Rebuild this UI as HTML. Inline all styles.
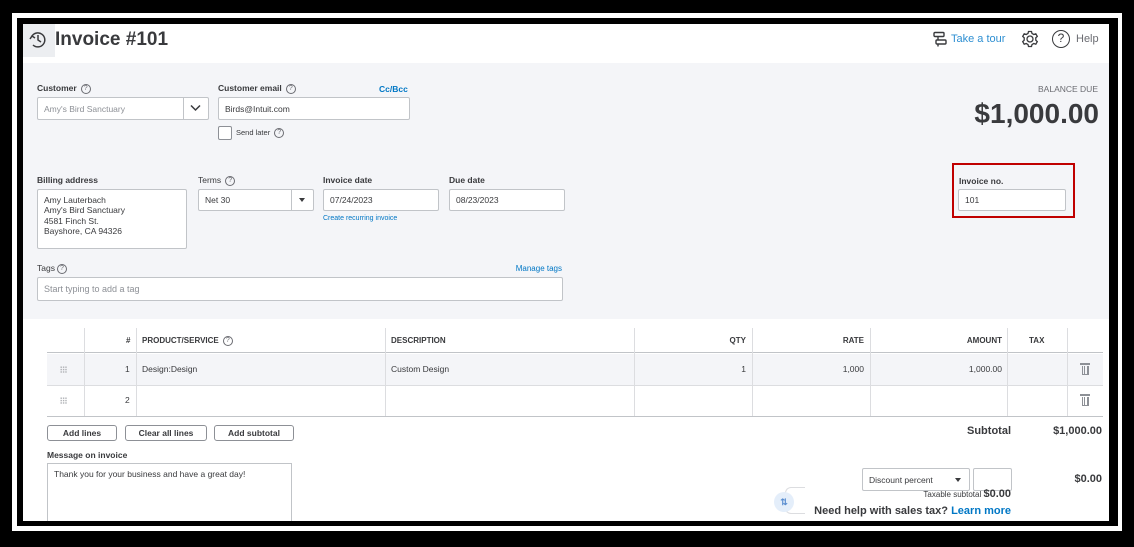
<!DOCTYPE html>
<html><head><meta charset="utf-8"><style>
*{margin:0;padding:0;box-sizing:border-box}
body{width:1134px;height:547px;background:#000;position:relative;overflow:hidden;font-family:"Liberation Sans",sans-serif;color:#393a3d}
.a{position:absolute}
.lbl{position:absolute;font-size:8.5px;font-weight:bold;color:#393a3d}
.inp{position:absolute;background:#fff;border:1px solid #c1c4c8;border-radius:2px;font-size:8.5px;color:#393a3d;padding-left:6px;display:flex;align-items:center}
.q{display:inline-block;width:10px;height:10px;border:1px solid #6b6c72;border-radius:50%;font-size:7px;text-align:center;line-height:8px;color:#6b6c72;font-weight:normal;vertical-align:middle;margin-left:4px}
.blue{color:#0077c5}
.th{position:absolute;top:336px;font-size:8px;font-weight:bold;color:#393a3d}
.td{position:absolute;font-size:8.5px;color:#393a3d}
.vl{position:absolute;width:1px;background:#dcdde0}
.btn{position:absolute;top:425px;height:16px;border:1px solid #8d9096;border-radius:3px;font-size:8.5px;font-weight:bold;text-align:center;line-height:14px;background:#fff}
.trash{position:absolute;width:7px;height:9px;border:1.5px solid #8d9096;border-top:none;background:repeating-linear-gradient(90deg,transparent 0 1px,#8d9096 1px 2px,transparent 2px 3px)}
.trash:before{content:"";position:absolute;left:-3px;top:-3px;width:10px;height:1.5px;background:#8d9096}
.drag{position:absolute;width:7px;height:7px;background:radial-gradient(circle,#b0b2b6 0.7px,transparent 0.9px) 0 0/2.4px 2.4px}
</style></head><body>
<div class="a" style="left:12px;top:13px;width:1110px;height:518px;background:#fff"></div>
<div class="a" style="left:17px;top:18px;width:1101px;height:508px;background:#000"></div>
<div class="a" style="left:23px;top:24px;width:1086px;height:497px;background:#fff"></div>
<!-- header -->
<div class="a" style="left:23px;top:24px;width:32px;height:33px;background:#eceef1"></div>
<svg class="a" style="left:28px;top:30px" width="20" height="20" viewBox="0 0 20 20" fill="none" stroke="#393a3d" stroke-width="1.5"><path d="M4 6A7 7 0 1 1 5 15"/><path d="M10 5v5l3 2"/><path d="M2 9l2-3 3 2"/></svg>
<div class="a" style="left:55px;top:29px;font-size:19px;font-weight:bold;color:#393a3d">Invoice #101</div>
<svg class="a" style="left:932px;top:31px" width="16" height="16" viewBox="0 0 16 16" fill="none" stroke="#393a3d" stroke-width="1.4"><rect x="2" y="1.5" width="10" height="4" rx="1"/><rect x="4" y="9" width="10" height="4" rx="1"/><path d="M6 5.5v3.5M6 13v2.5"/></svg>
<div class="a" style="left:951px;top:33px;font-size:11px;color:#2e8fd2">Take a tour</div>
<svg class="a" style="left:1021px;top:30px" width="18" height="18" viewBox="0 0 18 18" fill="none" stroke="#393a3d" stroke-width="1.3"><circle cx="9" cy="9" r="3"/><path d="M7.5 1.5h3l.5 2 1.8 1 2-.7 1.5 2.6-1.5 1.4v2.4l1.5 1.4-1.5 2.6-2-.7-1.8 1-.5 2h-3l-.5-2-1.8-1-2 .7-1.5-2.6 1.5-1.4V7.8L1.7 6.4l1.5-2.6 2 .7 1.8-1z"/></svg>
<div class="a" style="left:1052px;top:30px;width:18px;height:18px;border:1.5px solid #393a3d;border-radius:50%;font-size:12px;text-align:center;line-height:15px">?</div>
<div class="a" style="left:1076px;top:33px;font-size:11px;color:#6b6c72">Help</div>
<!-- gray -->
<div class="a" style="left:23px;top:63px;width:1086px;height:256px;background:#f4f5f8"></div>
<div class="lbl" style="left:37px;top:83px">Customer<span class="q">?</span></div>
<div class="inp" style="left:37px;top:97px;width:172px;height:23px;color:#8d9096">Amy's Bird Sanctuary</div>
<div class="a" style="left:183px;top:98px;width:1px;height:21px;background:#c1c4c8"></div>
<svg class="a" style="left:190px;top:104px" width="11" height="8" viewBox="0 0 11 8" fill="none" stroke="#393a3d" stroke-width="1.5"><path d="M1 1.5l4.5 4.5 4.5-4.5"/></svg>
<div class="lbl" style="left:218px;top:83px">Customer email<span class="q">?</span></div>
<div class="a blue" style="left:379px;top:84px;font-size:8.5px;font-weight:bold">Cc/Bcc</div>
<div class="inp" style="left:218px;top:97px;width:192px;height:23px">Birds@Intuit.com</div>
<div class="a" style="left:218px;top:126px;width:14px;height:14px;border:1px solid #8d9096;border-radius:2px;background:#fff"></div>
<div class="a" style="left:236px;top:128px;font-size:7.5px">Send later<span class="q">?</span></div>
<div class="a" style="right:36px;top:84px;font-size:8.5px;color:#6b6c72">BALANCE DUE</div>
<div class="a" style="right:35px;top:98px;font-size:28px;font-weight:bold;color:#393a3d">$1,000.00</div>
<div class="a" style="left:952px;top:163px;width:123px;height:55px;border:2px solid #c00000"></div>
<div class="lbl" style="left:959px;top:176px">Invoice no.</div>
<div class="inp" style="left:958px;top:189px;width:108px;height:22px">101</div>
<div class="lbl" style="left:37px;top:175px">Billing address</div>
<div class="a" style="left:37px;top:189px;width:150px;height:60px;background:#fff;border:1px solid #c1c4c8;border-radius:2px;font-size:8.5px;line-height:10.4px;padding:5px 6px">Amy Lauterbach<br>Amy's Bird Sanctuary<br>4581 Finch St.<br>Bayshore, CA 94326</div>
<div class="lbl" style="left:198px;top:175px;font-weight:normal">Terms<span class="q">?</span></div>
<div class="inp" style="left:198px;top:189px;width:116px;height:22px">Net 30</div>
<div class="a" style="left:291px;top:190px;width:1px;height:20px;background:#c1c4c8"></div>
<div class="a" style="left:299px;top:198px;border-left:3px solid transparent;border-right:3px solid transparent;border-top:4px solid #393a3d"></div>
<div class="lbl" style="left:323px;top:175px">Invoice date</div>
<div class="inp" style="left:323px;top:189px;width:116px;height:22px">07/24/2023</div>
<div class="a blue" style="left:323px;top:215px;font-size:7px">Create recurring invoice</div>
<div class="lbl" style="left:449px;top:175px">Due date</div>
<div class="inp" style="left:449px;top:189px;width:116px;height:22px">08/23/2023</div>
<div class="lbl" style="left:37px;top:263px;font-weight:normal">Tags<span class="q" style="margin-left:2px">?</span></div>
<div class="a blue" style="right:572px;top:264px;font-size:8px">Manage tags</div>
<div class="inp" style="left:37px;top:277px;width:526px;height:24px;color:#8d9096;font-size:9px">Start typing to add a tag</div>
<!-- table -->
<div class="a" style="left:47px;top:352px;width:1056px;height:1px;background:#c1c4c8"></div>
<div class="a" style="left:47px;top:354px;width:1056px;height:31px;background:#f4f5f8"></div>
<div class="a" style="left:47px;top:385px;width:1056px;height:1px;background:#dcdde0"></div>
<div class="a" style="left:47px;top:416px;width:1056px;height:1px;background:#c1c4c8"></div>
<div class="vl" style="left:84px;top:328px;height:88px"></div>
<div class="vl" style="left:136px;top:328px;height:88px"></div>
<div class="vl" style="left:385px;top:328px;height:88px"></div>
<div class="vl" style="left:634px;top:328px;height:88px"></div>
<div class="vl" style="left:752px;top:328px;height:88px"></div>
<div class="vl" style="left:870px;top:328px;height:88px"></div>
<div class="vl" style="left:1007px;top:328px;height:88px"></div>
<div class="vl" style="left:1067px;top:328px;height:88px"></div>
<div class="th" style="left:126px">#</div>
<div class="th" style="left:142px">PRODUCT/SERVICE<span class="q">?</span></div>
<div class="th" style="left:391px">DESCRIPTION</div>
<div class="th" style="right:388px">QTY</div>
<div class="th" style="right:270px">RATE</div>
<div class="th" style="right:132px">AMOUNT</div>
<div class="th" style="left:1029px">TAX</div>
<div class="drag" style="left:60px;top:366px"></div>
<div class="drag" style="left:60px;top:397px"></div>
<div class="td" style="left:125px;top:364px">1</div>
<div class="td" style="left:125px;top:395px">2</div>
<div class="td" style="left:142px;top:364px">Design:Design</div>
<div class="td" style="left:391px;top:364px">Custom Design</div>
<div class="td" style="right:388px;top:364px">1</div>
<div class="td" style="right:270px;top:364px">1,000</div>
<div class="td" style="right:132px;top:364px">1,000.00</div>
<div class="trash" style="left:1082px;top:366px"></div>
<div class="trash" style="left:1082px;top:397px"></div>
<div class="btn" style="left:47px;width:70px">Add lines</div>
<div class="btn" style="left:125px;width:82px">Clear all lines</div>
<div class="btn" style="left:214px;width:80px">Add subtotal</div>
<div class="a" style="right:123px;top:425px;font-size:11px;font-weight:bold">Subtotal</div>
<div class="a" style="right:32px;top:425px;font-size:11px;font-weight:bold">$1,000.00</div>
<div class="lbl" style="left:47px;top:450px">Message on invoice</div>
<div class="a" style="left:47px;top:463px;width:245px;height:60px;background:#fff;border:1px solid #c1c4c8;font-size:8.5px;padding:5px 6px">Thank you for your business and have a great day!</div>
<div class="inp" style="left:862px;top:468px;width:108px;height:23px">Discount percent</div>
<div class="a" style="left:955px;top:478px;border-left:3px solid transparent;border-right:3px solid transparent;border-top:4px solid #393a3d"></div>
<div class="inp" style="left:973px;top:468px;width:39px;height:23px"></div>
<div class="a" style="right:32px;top:473px;font-size:11px;font-weight:bold">$0.00</div>
<div class="a" style="right:123px;top:488px;font-size:8px;color:#393a3d;height:9px;overflow:hidden;line-height:12px">Taxable subtotal <b style="font-size:11px">$0.00</b></div>
<div class="a" style="left:785px;top:487px;width:20px;height:27px;border:1px solid #dcdde0;border-right:none;border-radius:6px 0 0 6px"></div>
<div class="a" style="left:774px;top:492px;width:20px;height:20px;border-radius:50%;background:#e4eefa;color:#5a8ed0;font-size:9px;text-align:center;line-height:20px;font-weight:bold">⇅</div>
<div class="a" style="right:123px;top:505px;font-size:11px;font-weight:bold">Need help with sales tax? <span class="blue">Learn more</span></div>
<!-- frame overlay -->
<div class="a" style="left:17px;top:18px;width:1101px;height:508px;border-style:solid;border-color:#000;border-width:6px 9px 5px 6px"></div>
</body></html>
